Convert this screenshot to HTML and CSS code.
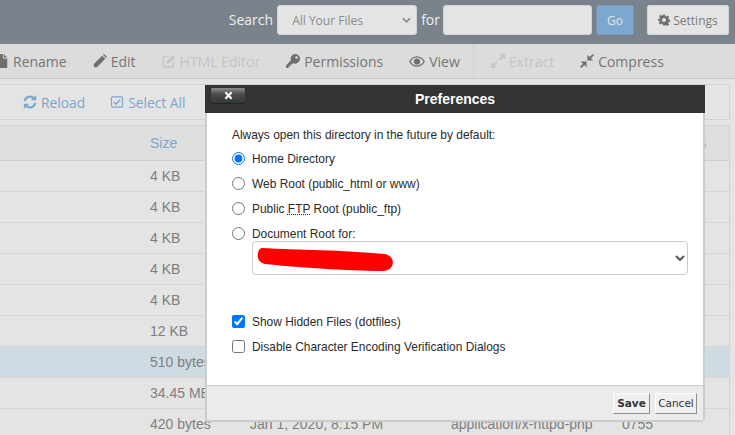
FILE: index.html
```html
<!DOCTYPE html>
<html lang="en">
<head>
<meta charset="utf-8">
<title>File Manager</title>
<link rel="stylesheet" href="styles.css">
</head>
<body>
<header class="topbar">
  <label class="search-label">Search</label>
  <div class="scope"><span>All Your Files</span>
    <svg class="scope-chevron" viewBox="0 0 10 6"><path d="M1 1l4 4 4-4" fill="none" stroke="#858585" stroke-width="1.8"/></svg>
  </div>
  <label class="search-label">for</label>
  <input class="search-input" type="text">
  <button class="go">Go</button>
  <button class="settings">
    <svg class="ico-sm" viewBox="0 0 24 24"><path fill="#6f6f6f" fill-rule="evenodd" d="M10 1h4l.7 3.2 2 .8 2.8-1.8 2.8 2.8-1.8 2.8.8 2 3.2.7v4l-3.2.7-.8 2 1.8 2.800-2.800 2.800-2.800-1.800-2 .8L14 23h-4l-.7-3.200-2-.8-2.800 1.800-2.800-2.800 1.800-2.800-.8-2L0 14v-4l3.200-.7.8-2L2.200 4.500 5 1.700l2.800 1.800 2-.8zM12 8a4 4 0 1 0 0 8 4 4 0 0 0 0-8z"/></svg>
    Settings</button>
</header>

<nav class="toolbar">
  <span class="tool rename"><svg class="ico" viewBox="0 0 16 16"><path fill="#6f6f6f" d="M2 0h7v5h5v11H2zM10 0l4 4h-4z"/></svg>Rename</span>
  <span class="tool"><svg class="ico" viewBox="0 0 16 16"><path fill="#6f6f6f" d="M1 11.500 10.500 2l3.500 3.500L4.500 15H1zM11.500 1l1-1 3.500 3.500-1 1z"/></svg>Edit</span>
  <span class="tool off"><svg class="ico" viewBox="0 0 16 16"><path fill="none" stroke="#c6c6c6" stroke-width="1.600" d="M13 9v4.500a1 1 0 0 1-1 1H2.500a1 1 0 0 1-1-1V4a1 1 0 0 1 1-1H8"/><path fill="#c6c6c6" d="M5.500 8.500 12.500 1.500 15 4 8 11H5.500z"/></svg>HTML Editor</span>
  <span class="tool"><svg class="ico" viewBox="0 0 16 16"><path fill="#6f6f6f" fill-rule="evenodd" d="M10.500 0a5.500 5.500 0 1 1-2.300 10.500L6.500 12H5v2H3v2H0v-3l5.600-5.800A5.500 5.500 0 0 1 10.500 0zM12 2.500a1.500 1.500 0 1 0 0 3 1.500 1.500 0 0 0 0-3z"/></svg>Permissions</span>
  <span class="tool"><svg class="ico eye" viewBox="0 0 18 12"><path fill="#6f6f6f" fill-rule="evenodd" d="M9 0c4 0 7.200 2.600 9 6-1.800 3.400-5 6-9 6S1.800 9.400 0 6c1.800-3.400 5-6 9-6zM9 1.500C6 1.500 3.400 3.300 1.800 6 3.400 8.700 6 10.500 9 10.500s5.600-1.800 7.200-4.500C14.600 3.300 12 1.500 9 1.500zM9 2.500a3.500 3.500 0 1 1 0 7 3.500 3.500 0 0 1 0-7z"/></svg>View</span>
  <span class="tool-sep"></span>
  <span class="tool off"><svg class="ico" viewBox="0 0 16 16"><path fill="#c6c6c6" d="M9.500 0H16v6.500L13.500 4 10 7.500 8.500 6 12 2.500zM6.500 16H0V9.500L2.500 12 6 8.500 7.500 10 4 13.500z"/></svg>Extract</span>
  <span class="tool"><svg class="ico" viewBox="0 0 16 16"><path fill="#6f6f6f" d="M8.500 7.500V1L11 3.500 14.500 0 16 1.500 12.500 5 15 7.500zM7.500 8.500V15L5 12.500 1.500 16 0 14.500 3.500 11 1 8.500z"/></svg>Compress</span>
</nav>

<section class="actions">
  <span class="action"><svg class="ico" viewBox="0 0 16 16"><path fill="none" stroke="#7ba6cf" stroke-width="2.400" d="M2 7a6 6 0 0 1 10.500-3M14 9a6 6 0 0 1-10.500 3"/><path fill="#7ba6cf" d="M15 0v6H9zM1 16v-6h6z"/></svg>Reload</span>
  <span class="action"><svg class="ico" viewBox="0 0 16 16"><rect x="1.700" y="2.200" width="12.600" height="11.600" rx="1.500" fill="none" stroke="#7ba6cf" stroke-width="1.400"/><path d="M4.500 8l2.500 2.500 4.500-5" fill="none" stroke="#7ba6cf" stroke-width="1.600"/></svg>Select All</span>
</section>

<section class="files">
  <div class="row head"><span>Size</span><span></span><span></span><span class="perm-head">Permissions</span></div>
  <div class="row"><span>4 KB</span></div>
  <div class="row"><span>4 KB</span></div>
  <div class="row"><span>4 KB</span></div>
  <div class="row"><span>4 KB</span></div>
  <div class="row"><span>4 KB</span></div>
  <div class="row"><span>12 KB</span></div>
  <div class="row selected"><span>510 bytes</span></div>
  <div class="row"><span>34.45 MB</span></div>
  <div class="row"><span>420 bytes</span><span>Jan 1, 2020, 8:15 PM</span><span>application/x-httpd-php</span><span>0755</span></div>
</section>

<div class="dialog" role="dialog">
  <div class="dialog-head">
    <button class="close"><svg viewBox="0 0 10 10"><path d="M1.500 1.500l7 7M8.500 1.500l-7 7" stroke="#fff" stroke-width="2.400"/></svg></button>
    <h2>Preferences</h2>
  </div>
  <div class="dialog-body">
    <p class="lead">Always open this directory in the future by default:</p>
    <label class="opt"><input type="radio" name="dir" checked>Home Directory</label>
    <label class="opt"><input type="radio" name="dir">Web Root (public_html or www)</label>
    <label class="opt"><input type="radio" name="dir"><span>Public <abbr>FTP</abbr> Root (public_ftp)</span></label>
    <label class="opt opt-doc"><input type="radio" name="dir">Document Root for:</label>
    <div class="doc-select">
      <select><option></option></select>
      <svg class="doc-chevron" viewBox="0 0 10 6"><path d="M1 1l4 4 4-4" fill="none" stroke="#555" stroke-width="2"/></svg>
      <svg class="scribble" viewBox="0 0 136 24"><path fill="#f00" d="M6 0C40 2 85 2 128 6 136 8 137 14 135 18 132 24 124 23 118 23 80 22 35 19 8 16 1 14 0 9 1 5 2 1 3 0 6 0z"/></svg>
    </div>
    <label class="opt chk"><input type="checkbox" checked>Show Hidden Files (dotfiles)</label>
    <label class="opt"><input type="checkbox">Disable Character Encoding Verification Dialogs</label>
  </div>
  <div class="dialog-foot">
    <button class="btn save">Save</button>
    <button class="btn cancel">Cancel</button>
  </div>
</div>
</body>
</html>
```

FILE: styles.css
```css
* { box-sizing: border-box; }
html, body { margin: 0; height: 100%; }
body {
  background: #e4e4e4;
  font-family: "Open Sans", sans-serif;
  font-size: 14px;
  overflow: hidden;
  position: relative;
}
.topbar {
  height: 44px;
  background: #7a828b;
  display: flex;
  align-items: center;
  justify-content: flex-end;
  padding: 0 6px 4px 0;
}
.search-label { color: #eee; font-size: 14px; margin: 0 4px 2px 0; }
.scope {
  width: 140px; height: 30px;
  background: #e4e4e4;
  border: 1px solid #d4d4d4;
  border-radius: 3px;
  font-size: 12px;
  color: #8b8b8b;
  display: flex;
  align-items: center;
  justify-content: space-between;
  padding: 0 5px 0 14px;
  margin-right: 4px;
}
.scope-chevron { width: 9px; height: 6px; }
.search-input {
  width: 149px; height: 30px;
  background: #e4e4e4;
  border: 1px solid #d4d4d4;
  border-radius: 3px;
  margin-left: -1px;
}
.go {
  width: 38px; height: 30px;
  margin-left: 4px;
  background: #7ca7cf;
  border: 1px solid #7199c0;
  border-radius: 2px;
  color: #e6e6e6;
  font: 12px "Open Sans", sans-serif;
}
.settings {
  width: 82px; height: 30px;
  margin-left: 13px;
  background: #e4e4e4;
  border: 1px solid #d4d4d4;
  border-radius: 2px;
  color: #7a7a7a;
  font: 12px "Open Sans", sans-serif;
  display: flex;
  align-items: center;
  justify-content: center;
  gap: 3px;
  padding: 0;
}
.ico-sm { width: 12px; height: 12px; }
.toolbar {
  height: 35px;
  background: #dcdcdc;
  border-bottom: 1px solid #cacaca;
  display: flex;
  align-items: center;
  color: #757575;
}
.tool { display: flex; align-items: center; gap: 4px; margin-right: 26px; white-space: nowrap; }
.tool.rename { margin-left: -5px; }
.tool.off { color: #c4c4c4; }
.ico { width: 14px; height: 14px; flex: none; }
.eye { width: 16px; height: 11px; }
.tool-sep { align-self: stretch; border-left: 1px dotted #c8c8c8; margin: 0 17px 0 -13px; }
.actions {
  height: 36px;
  margin: 5px 5px 0 -2px;
  border: 1px solid #d2d2d2;
  display: flex;
  align-items: center;
  padding-left: 24px;
  gap: 25px;
  color: #7ba6cf;
  font-size: 13.8px;
}
.action { display: flex; align-items: center; gap: 4px; }
.files {
  margin: 5px 5px 0 -2px;
  border: 1px solid #d2d2d2;
  font-family: "Liberation Sans", Arial, sans-serif;
  color: #7e7e7e;
}
.row {
  height: 31px;
  display: grid;
  grid-template-columns: 100px 201px 171px 1fr;
  align-items: center;
  padding-left: 151px;
  border-bottom: 1px solid #d5d5d5;
  white-space: nowrap;
}
.head { height: 35px; background: #dedede; color: #7ba6cf; border-bottom-color: #cfcfcf; }
.perm-head { padding-left: 8px; }
.selected { background: #cfdbe3; }
.dialog {
  position: absolute;
  left: 205px; top: 85px;
  width: 500px;
  height: 335px;
  display: flex;
  flex-direction: column;
  font-family: "Liberation Sans", Arial, sans-serif;
  font-size: 11.95px;
  color: #2b2b2b;
}
.dialog-head {
  height: 28px;
  background: #333;
  position: relative;
  display: flex;
  align-items: center;
  justify-content: center;
  flex: none;
}
.dialog-head h2 { margin: 0; font-size: 14px; font-weight: bold; color: #fff; }
.close {
  position: absolute;
  left: 6px; top: 3px;
  width: 34px; height: 15px;
  padding: 0;
  border: 0;
  border-radius: 1px 1px 3px 3px;
  background: linear-gradient(#8d8d8d, #4d4d4d 40%, #363636);
  box-shadow: 0 1px 1px #12272c;
  display: flex;
  align-items: center;
  justify-content: center;
}
.close svg { width: 9px; height: 9px; }
.dialog-body {
  flex: 1;
  background: #fff;
  margin: 0 2px;
  padding: 15px 15px 0 25px;
  min-height: 0;
  box-shadow: -2px 0 0 #ccc, 2px 0 0 #ccc;
}
.lead { margin: 0 0 3px; line-height: 15px; }
.opt { display: flex; align-items: center; height: 25px; gap: 7px; white-space: nowrap; }
.opt input { margin: 0; width: 13px; height: 13px; flex: none; }
abbr { text-decoration: underline dotted; }
.doc-select {
  position: relative;
  margin: -5px 0 34px 20px;
  height: 34px;
}
.doc-select select {
  appearance: none;
  width: 100%;
  height: 100%;
  background: #fff;
  border: 1px solid #ccc;
  border-radius: 4px;
}
.doc-chevron { position: absolute; right: 3px; top: 14px; width: 10px; height: 6px; }
.scribble { position: absolute; left: 5px; top: 7px; width: 136px; height: 24px; }
.dialog-foot {
  height: 35px;
  flex: none;
  background: #ebebeb;
  margin: 0 2px;
  border-top: 1px solid #ccc;
  display: flex;
  justify-content: flex-end;
  align-items: center;
  gap: 5px;
  padding: 0 6px 0 0;
  box-shadow: 0 2px 0 #ccc, -2px 0 0 #ccc, 2px 0 0 #ccc;
}
.btn {
  height: 21px;
  width: 42px;
  padding: 0;
  background: #f0f0f0;
  border: 1px solid;
  border-color: #fff #8e8e8e #8e8e8e #fff;
  font: 10.5px "DejaVu Sans", sans-serif;
  color: #333;
}
.save { font-weight: bold; width: 37px; }
```
